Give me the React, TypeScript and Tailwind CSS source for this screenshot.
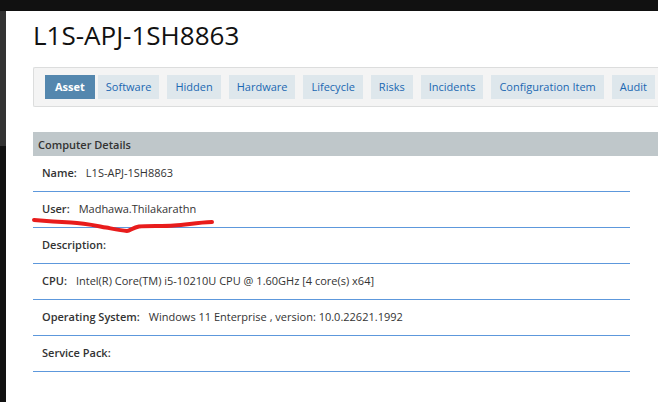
import * as React from "react"
import clsx from "clsx"

const tabs = [
  "Asset",
  "Software",
  "Hidden",
  "Hardware",
  "Lifecycle",
  "Risks",
  "Incidents",
  "Configuration Item",
  "Audit",
]

const details = [
  { label: "Name", value: "L1S-APJ-1SH8863" },
  { label: "User", value: "Madhawa.Thilakarathn", marked: true },
  { label: "Description", value: "" },
  { label: "CPU", value: "Intel(R) Core(TM) i5-10210U CPU @ 1.60GHz [4 core(s) x64]" },
  { label: "Operating System", value: "Windows 11 Enterprise , version: 10.0.22621.1992" },
  { label: "Service Pack", value: "" },
]

function TabBar() {
  const [active, setActive] = React.useState("Asset")

  return (
    <nav className="flex gap-2 rounded-l-xs border border-r-0 border-[#dcdddd] bg-[#f4f4f4] py-[7px] pl-[11px]">
      {tabs.map((tab) => (
        <a
          key={tab}
          href="#"
          onClick={(e) => {
            e.preventDefault()
            setActive(tab)
          }}
          className={clsx(
            "shrink-0 text-[11px] leading-6 whitespace-nowrap",
            tab === active
              ? "-mr-[5px] bg-[#5487ae] px-2.5 font-bold text-white"
              : "bg-[#dee7ec] px-2 text-[#1b67b2]"
          )}
        >
          {tab}
        </a>
      ))}
    </nav>
  )
}

// Hand drawn red line under a row
function Underline() {
  return (
    <svg
      className="pointer-events-none absolute top-6 -left-1 h-5 w-48"
      viewBox="0 0 192 20"
      fill="none"
      stroke="#e81c1c"
      strokeWidth="4"
      strokeLinecap="round"
      strokeLinejoin="round"
      aria-hidden="true"
    >
      <path d="M5 4C16 5 30 6 42 6.500C55 7 66 9.500 77 11.500C85 13 92 14.500 98 15C101 15 104 11.500 110 10.500C119 9.500 134 10.500 145 9.500C159 8.500 168 6.500 183 6" />
    </svg>
  )
}

function App() {
  return (
    <div className="flex min-h-screen flex-col overflow-x-hidden bg-[#111111] font-['Open_Sans',sans-serif] text-[#333333]">
      <header className="h-[11px]" />
      <div className="flex flex-1">
        <aside className="w-1.5 shrink-0">
          <div className="h-[135px] bg-[#333333]" />
        </aside>
        <main className="min-w-0 flex-1 bg-white pl-[27px]">
          <h1 className="pt-1 pb-3 text-[26px] leading-10 text-[#111111]">L1S-APJ-1SH8863</h1>
          <TabBar />
          <section className="mt-[25px]">
            <h2 className="h-6 bg-[#bfc7ca] px-[5px] text-[11px] leading-[26px] font-semibold">
              Computer Details
            </h2>
            <dl className="mr-7 text-[11px]">
              {details.map(({ label, value, marked }) => (
                <div
                  key={label}
                  className="relative flex h-9 items-center gap-[9px] border-b border-[#5d98dc] px-[9px]"
                >
                  <dt className="font-semibold">{label}:</dt>
                  <dd>{value}</dd>
                  {marked && <Underline />}
                </div>
              ))}
            </dl>
          </section>
        </main>
      </div>
    </div>
  )
}

export default App
